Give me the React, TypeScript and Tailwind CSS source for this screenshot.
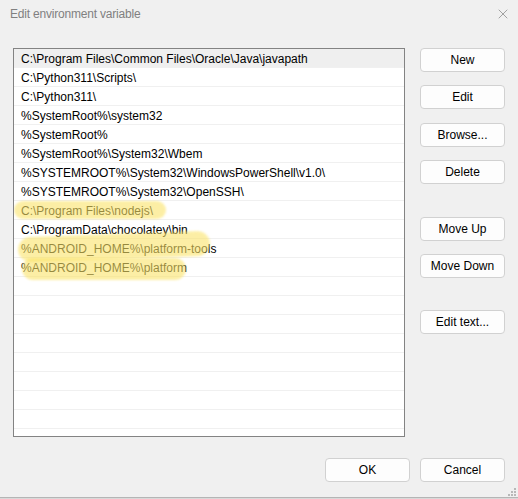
import { X } from "lucide-react";

const paths = [
  "C:\\Program Files\\Common Files\\Oracle\\Java\\javapath",
  "C:\\Python311\\Scripts\\",
  "C:\\Python311\\",
  "%SystemRoot%\\system32",
  "%SystemRoot%",
  "%SystemRoot%\\System32\\Wbem",
  "%SYSTEMROOT%\\System32\\WindowsPowerShell\\v1.0\\",
  "%SYSTEMROOT%\\System32\\OpenSSH\\",
  "C:\\Program Files\\nodejs\\",
  "C:\\ProgramData\\chocolatey\\bin",
  "%ANDROID_HOME%\\platform-tools",
  "%ANDROID_HOME%\\platform",
];

const ROWS = 21;

const DialogButton = ({ label }: { label: string }) => (
  <button className="h-[24px] w-[85px] rounded-[4px] border border-[#d1d1d1] bg-[#fdfdfd] text-[12px] text-black">
    {label}
  </button>
);

const ResizeGrip = () => (
  <svg width="9" height="9" viewBox="0 0 9 9" className="absolute right-[2px] bottom-[3px]">
    {[
      [7, 1],
      [4, 4],
      [7, 4],
      [1, 7],
      [4, 7],
      [7, 7],
    ].map(([x, y], i) => (
      <rect key={i} x={x} y={y} width="2" height="2" fill="#b8b8b8" />
    ))}
  </svg>
);

export default function App() {
  const rows = Array.from({ length: ROWS }, (_, i) => paths[i] ?? "");

  return (
    <div
      className="relative h-[499px] w-[518px] overflow-hidden bg-[#f0f0f0] text-[12px] text-black"
      style={{ fontFamily: '"Liberation Sans", Arial, sans-serif' }}
    >
      {/* title bar */}
      <div className="flex h-[27px] items-center justify-between pr-[7px] pl-[10px]">
        <span className="text-[12px] tracking-[-0.2px] text-[#808080]">Edit environment variable</span>
        <X size={16} strokeWidth={1} className="text-[#777]" />
      </div>

      <div className="mt-[21px] flex">
        {/* path list */}
        <div className="relative ml-[13px] h-[389px] w-[392px] overflow-hidden border border-[#838383] bg-white">
          {rows.map((p, i) => (
            <div
              key={i}
              className={`flex h-[19px] items-center border-b border-[#f0f0f0] pt-[1px] pl-[7px] ${
                i === 0 ? "bg-[#efefef]" : ""
              }`}
            >
              {p}
            </div>
          ))}

          {/* highlighter marks */}
          <div className="pointer-events-none absolute top-[152px] left-[0px] h-[18px] w-[152px] rounded-full bg-[#fbe46a] opacity-60 blur-[1px]" />
          <div className="pointer-events-none absolute top-[185px] left-[4px] h-[25px] w-[192px] -rotate-2 rounded-full bg-[#fbe46a] opacity-60 blur-[1px]" />
          <div className="pointer-events-none absolute top-[209px] left-[8px] h-[22px] w-[164px] rounded-full bg-[#fbe46a] opacity-60 blur-[1px]" />
        </div>

        {/* side buttons */}
        <div className="ml-[15px] flex flex-col">
          <DialogButton label="New" />
          <div className="mt-[13px]">
            <DialogButton label="Edit" />
          </div>
          <div className="mt-[14px]">
            <DialogButton label="Browse..." />
          </div>
          <div className="mt-[13px]">
            <DialogButton label="Delete" />
          </div>
          <div className="mt-[33px]">
            <DialogButton label="Move Up" />
          </div>
          <div className="mt-[13px]">
            <DialogButton label="Move Down" />
          </div>
          <div className="mt-[32px]">
            <DialogButton label="Edit text..." />
          </div>
        </div>
      </div>

      {/* footer */}
      <div className="mt-[21px] flex justify-end gap-[10px] pr-[13px]">
        <DialogButton label="OK" />
        <DialogButton label="Cancel" />
      </div>

      <ResizeGrip />
      <div className="absolute right-0 bottom-0 left-0 h-[2px] border-t border-[#b5b5b5] bg-[#d9d9d9]" />
    </div>
  );
}
